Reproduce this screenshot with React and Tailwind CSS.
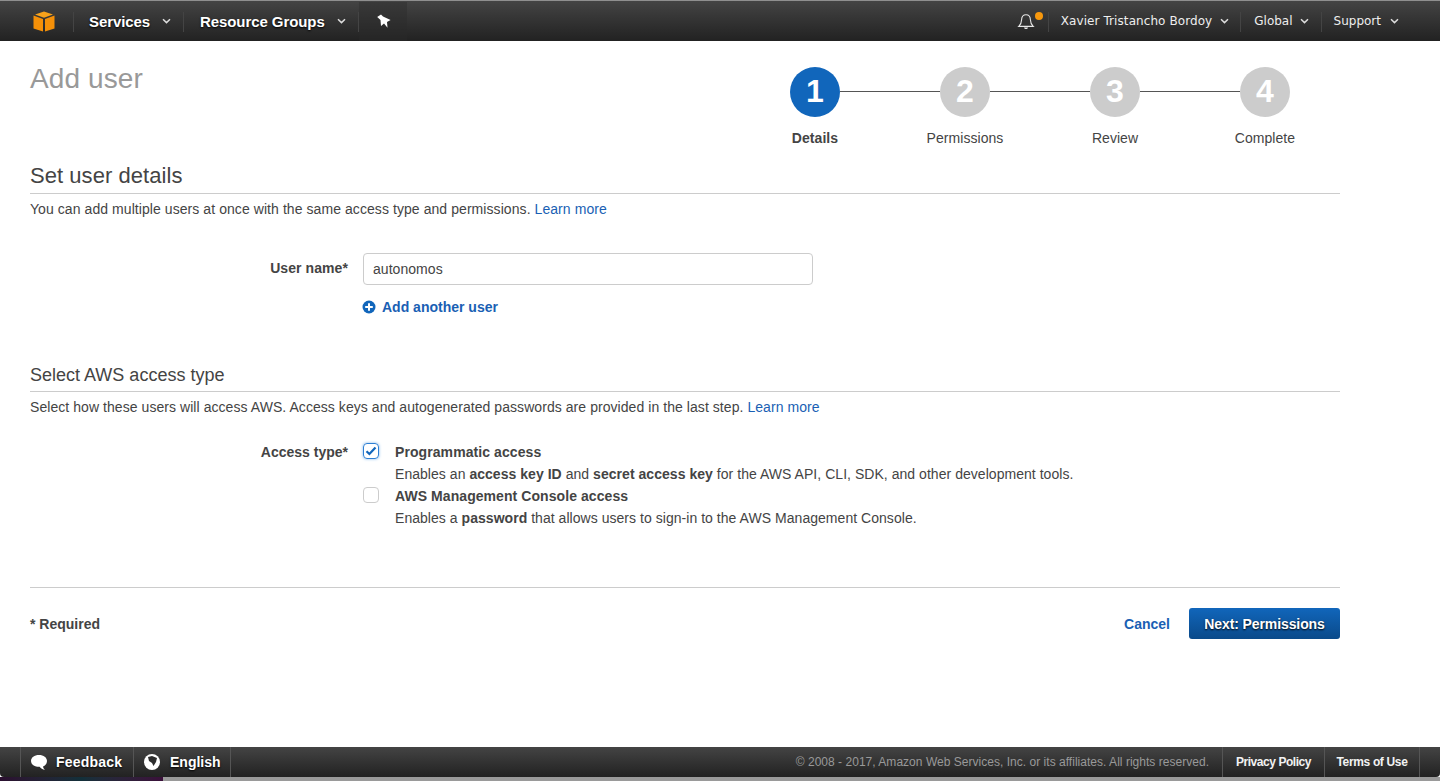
import React from "react";

const Chevron = ({ className = "" }) => (
  <svg width="9" height="6" viewBox="0 0 9 6" className={className}>
    <path d="M1 1.2 L4.5 4.6 L8 1.2" fill="none" stroke="#dcdcdc" strokeWidth="1.5" />
  </svg>
);

const Sep = () => <div className="h-5 w-px bg-[#1c1c1c] border-r border-[#444]" />;

const Step = ({ n, label, active }) => (
  <div className="flex w-[100px] flex-col items-center">
    <div className={`flex h-[50px] w-[50px] items-center justify-center rounded-full text-[32px] font-bold text-white ${active ? "bg-[#1166bb]" : "bg-[#cccccc]"}`}>
      {n}
    </div>
    <div className={`mt-[12px] whitespace-nowrap text-sm leading-[18px] tracking-[0.05px] ${active ? "font-bold text-[#444]" : "text-[#444]"}`}>{label}</div>
  </div>
);

const Line = () => <div className="-mx-[25px] mt-[24px] h-px w-[100px] bg-[#555]" />;

export default function App() {
  return (
    <div className="flex h-[781px] w-[1440px] flex-col overflow-hidden bg-white font-['Liberation_Sans',sans-serif] text-sm text-[#444]">
      <header className="flex h-[41px] shrink-0 items-center border-t border-[#8f8f8f] bg-gradient-to-b from-[#444444] to-[#222222] pt-px text-white">
        <div className="flex w-[73px] justify-end pr-[18px]">
          <svg width="22" height="21" viewBox="0 0 22 21">
            <path d="M11 0.5 L20 3.6 L11 6.8 L2 3.6 Z" fill="#f7a21b" />
            <path d="M0.5 4.6 L10 8 V20.5 L0.5 17.4 Z" fill="#f59008" />
            <path d="M21.5 4.6 L12 8 V20.5 L21.5 17.4 Z" fill="#f59008" />
          </svg>
        </div>
        <Sep />
        <div className="flex items-center pl-[15px] pr-[12px] text-[15px] font-bold tracking-[-0.1px] [text-shadow:0_1px_2px_#000]">
          <span>Services</span>
          <Chevron className="ml-[12px]" />
        </div>
        <Sep />
        <div className="flex items-center pl-[16px] pr-[12px] text-[15px] font-bold tracking-[-0.07px] [text-shadow:0_1px_2px_#000]">
          <span>Resource Groups</span>
          <Chevron className="ml-[12px]" />
        </div>
        <Sep />
        <div className="-mt-px flex h-[39px] w-[48px] items-center justify-center bg-[#2a2a2a]/40 pl-[2px]">
          <svg width="14" height="14" viewBox="0 0 14 14">
            <path d="M0.2 3 L4 0.5 L6 2.5 L13.6 6 L10 8 L10.5 13.8 L7 9.6 L4 12 L3.5 6 Z" fill="#ffffff" />
          </svg>
        </div>
        <div className="flex-1" />
        <div className="relative mr-[12px] flex w-[37px] justify-end">
          <svg width="18" height="18" viewBox="0 0 18 18" className="mr-[1px]">
            <path d="M9 1.8 C5.8 1.8 4.7 4.2 4.6 6.8 C4.5 9.8 3.6 11.8 1.8 13.4 H16.2 C14.4 11.8 13.5 9.8 13.4 6.8 C13.3 4.2 12.2 1.8 9 1.8 Z" fill="none" stroke="#e8e8e8" strokeWidth="1.1" />
            <path d="M7 14.6 C7.4 16.6 10.6 16.6 11 14.6 Z" fill="#e8e8e8" />
          </svg>
          <span className="absolute -right-[7px] -top-[1px] h-2 w-2 rounded-full bg-[#f7980d]" />
        </div>
        <Sep />
        <div className="flex items-center pl-[12px] pr-[11px] font-['DejaVu_Sans',sans-serif] text-[12px] tracking-[0.08px]">
          <span className="whitespace-nowrap text-[#eeeeee]">Xavier Tristancho Bordoy</span>
          <Chevron className="ml-[8px]" />
        </div>
        <Sep />
        <div className="flex items-center pl-[13px] pr-[12px] font-['DejaVu_Sans',sans-serif] text-[12px]">
          <span className="text-[#eeeeee]">Global</span>
          <Chevron className="ml-[7px]" />
        </div>
        <Sep />
        <div className="flex items-center pl-[12px] pr-[41px] font-['DejaVu_Sans',sans-serif] text-[12px]">
          <span className="text-[#eeeeee]">Support</span>
          <Chevron className="ml-[9px]" />
        </div>
      </header>

      <main className="flex-1 pl-[30px] pr-[100px]">
        <div className="flex h-[113px] justify-between">
          <h1 className="pt-[22px] text-[28px] leading-[32px] tracking-[0.1px] text-[#999999]">Add user</h1>
          <div className="mr-[25px] flex items-start pt-[26px]">
            <Step n="1" label="Details" active />
            <Line />
            <Step n="2" label="Permissions" />
            <Line />
            <Step n="3" label="Review" />
            <Line />
            <Step n="4" label="Complete" />
          </div>
        </div>

        <h2 className="mt-[9px] border-b border-[#cccccc] pb-[4px] text-[22px] leading-[26px] tracking-[0.05px] text-[#444]">Set user details</h2>
        <p className="mt-[6px] leading-[18px] tracking-[0.07px]">
          You can add multiple users at once with the same access type and permissions. <a className="text-[#1a5fb4]">Learn more</a>
        </p>

        <div className="mt-[35px] flex">
          <label className="w-[318px] pt-[6px] text-right font-bold leading-[18px] tracking-[0.08px]">User name*</label>
          <div className="ml-[15px]">
            <div className="flex h-[32px] w-[450px] items-center rounded-[4px] border border-[#cccccc] pl-[9px] text-sm tracking-[0.05px] text-[#444]">autonomos</div>
            <div className="mt-[13px] flex items-center font-bold text-[#1a5fb4]">
              <svg width="14" height="14" viewBox="0 0 14 14" className="-ml-[1px]">
                <circle cx="7" cy="7" r="6.5" fill="#1166bb" />
                <path d="M7 3.2 V10.8 M3.2 7 H10.8" stroke="#fff" strokeWidth="2" />
              </svg>
              <span className="ml-[6px] leading-[18px]">Add another user</span>
            </div>
          </div>
        </div>

        <h2 className="mt-[48px] border-b border-[#cccccc] pb-[5px] text-[18px] leading-[22px] text-[#444]">Select AWS access type</h2>
        <p className="mt-[6px] leading-[18px] tracking-[0.06px]">
          Select how these users will access AWS. Access keys and autogenerated passwords are provided in the last step. <a className="text-[#1a5fb4]">Learn more</a>
        </p>

        <div className="mt-[27px] flex">
          <label className="w-[318px] text-right font-bold leading-[18px]">Access type*</label>
          <div className="ml-[15px] flex flex-col">
            <div className="flex">
              <div className="flex h-[16px] w-[16px] items-center justify-center rounded-[4px] border border-[#2d7fd3] shadow-[0_0_3px_#7fb5ea]">
                <svg width="12" height="10" viewBox="0 0 12 10">
                  <path d="M1.5 5.2 L4.4 8 L10.5 1.5" fill="none" stroke="#1166bb" strokeWidth="2.2" />
                </svg>
              </div>
              <div className="ml-[16px] -mt-[2px] leading-[22px] tracking-[0.04px]">
                <div className="font-bold tracking-[0.08px]">Programmatic access</div>
                <div>Enables an <b>access key ID</b> and <b>secret access key</b> for the AWS API, CLI, SDK, and other development tools.</div>
              </div>
            </div>
            <div className="mt-[2px] flex">
              <div className="h-[16px] w-[16px] rounded-[4px] border border-[#cccccc]" />
              <div className="ml-[16px] -mt-[2px] leading-[22px] tracking-[0.04px]">
                <div className="font-bold tracking-[0.07px]">AWS Management Console access</div>
                <div>Enables a <b>password</b> that allows users to sign-in to the AWS Management Console.</div>
              </div>
            </div>
          </div>
        </div>

        <div className="mt-[58px] flex items-center justify-between border-t border-[#cccccc] pt-[20px]">
          <span className="font-bold">* Required</span>
          <div className="flex items-center">
            <a className="font-bold text-[#1a5fb4]">Cancel</a>
            <button className="ml-[19px] h-[31px] w-[151px] rounded-[3px] bg-gradient-to-b from-[#1166bb] to-[#0a4a8a] text-sm font-bold tracking-[-0.1px] text-white [text-shadow:0_1px_2px_#000]">Next: Permissions</button>
          </div>
        </div>
      </main>

      <footer className="flex h-[30px] shrink-0 items-center rounded-b-[4px] bg-gradient-to-b from-[#444444] to-[#222222] text-xs text-white">
        <div className="h-full w-[20px]" />
        <div className="flex h-full w-[113px] items-center border-l border-[#555] pl-[9px]">
          <svg width="18" height="17" viewBox="0 0 18 17">
            <path d="M9 1 C13.6 1 17 3.6 17 7 C17 10 14.6 12 13 12.4 C13.2 13.8 14 15 15.2 15.8 C12.6 15.6 10.6 14.2 9.6 12.8 L9 12.8 C4.4 12.8 1 10.4 1 7 C1 3.6 4.4 1 9 1 Z" fill="#fff" />
          </svg>
          <span className="ml-[8px] text-sm font-bold tracking-[0.2px] [text-shadow:0_1px_2px_#000]">Feedback</span>
        </div>
        <div className="flex h-full w-[97px] items-center border-l border-[#555] pl-[10px]">
          <svg width="16" height="16" viewBox="0 0 16 16">
            <circle cx="8" cy="8" r="8" fill="#fff" />
            <path d="M4 3 L8 2 L13 4 L12 8 L9.5 12 L8 9 L5 7 Z" fill="#2d2d2d" />
          </svg>
          <span className="ml-[10px] text-sm font-bold [text-shadow:0_1px_2px_#000]">English</span>
        </div>
        <div className="h-full border-l border-[#555]" />
        <div className="flex-1" />
        <span className="mr-[13px] whitespace-nowrap tracking-[0.025px] text-[#999999]">© 2008 - 2017, Amazon Web Services, Inc. or its affiliates. All rights reserved.</span>
        <div className="flex h-full w-[102px] items-center justify-center border-l border-[#555] font-bold tracking-[-0.45px] text-[#f2f2f2]">Privacy Policy</div>
        <div className="flex h-full w-[96px] items-center justify-center border-x border-[#555] font-bold tracking-[-0.35px] text-[#f2f2f2]">Terms of Use</div>
        <div className="w-[20px]" />
      </footer>
      <div className="flex h-[4px] shrink-0 bg-[#9a9a9a]">
        <div className="h-full w-[163px] bg-gradient-to-r from-[#2b1030] via-[#12303a] to-[#3a0f3a]" />
      </div>
    </div>
  );
}
